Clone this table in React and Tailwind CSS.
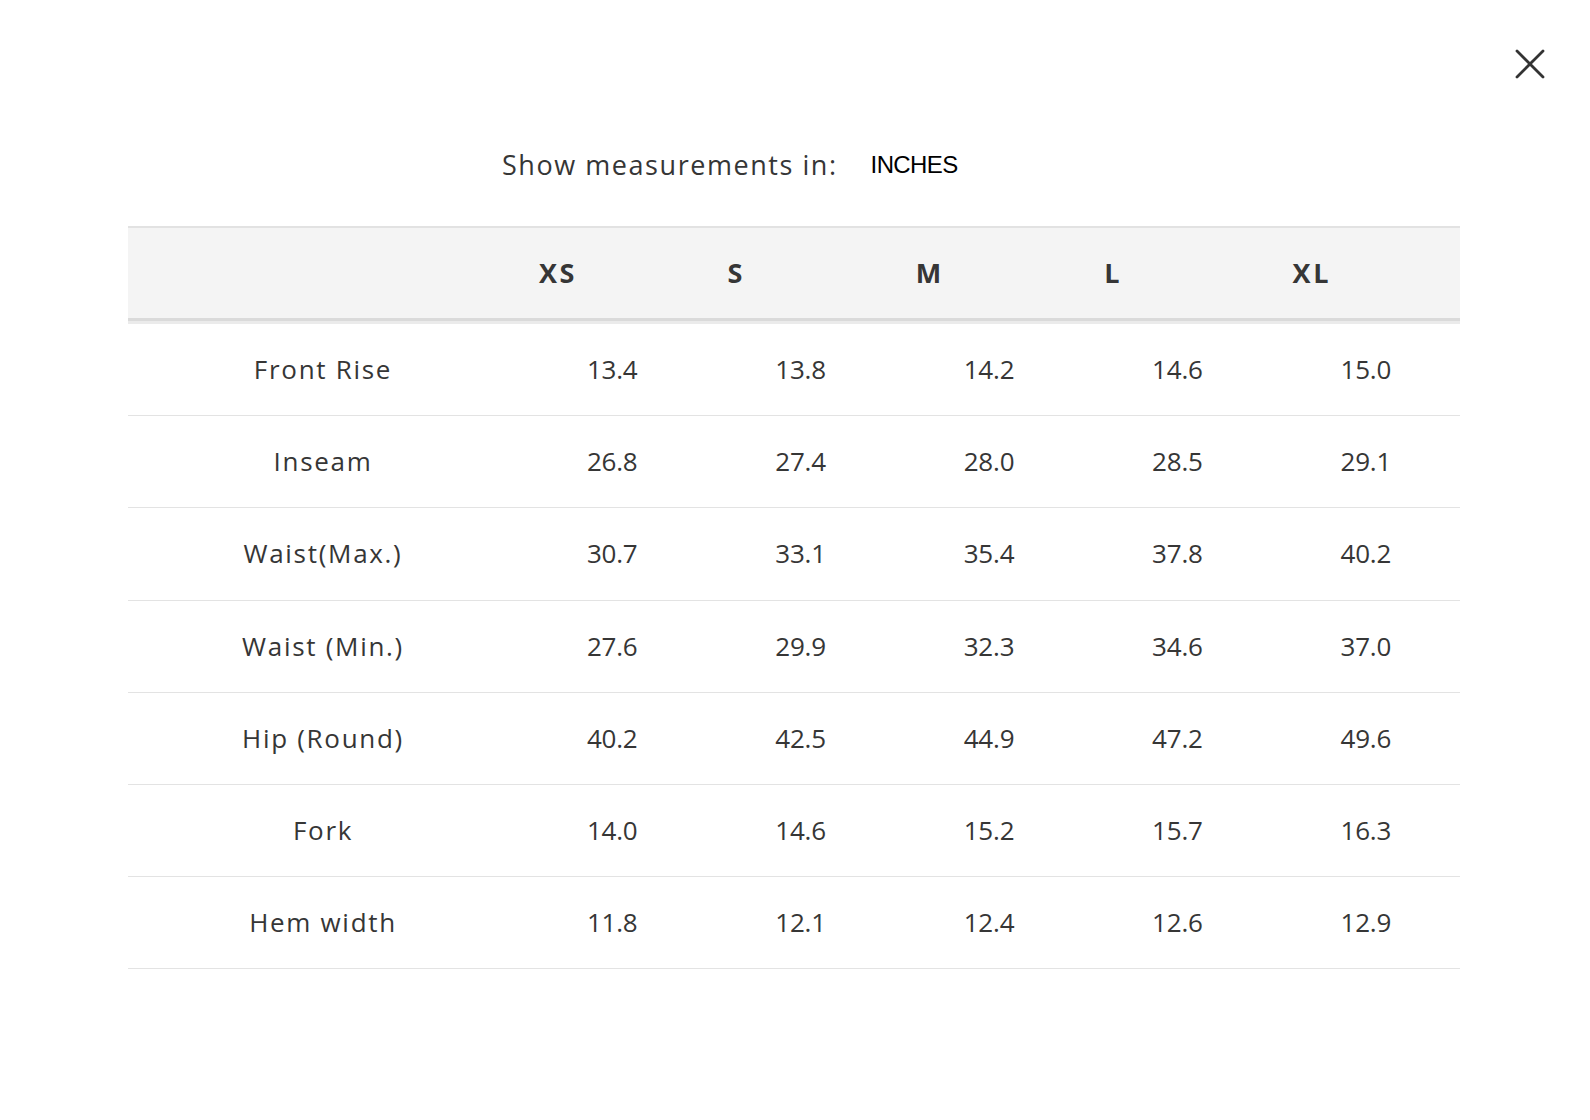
const sizes = ["XS", "S", "M", "L", "XL"];

const rows = [
  { label: "Front Rise", values: ["13.4", "13.8", "14.2", "14.6", "15.0"] },
  { label: "Inseam", values: ["26.8", "27.4", "28.0", "28.5", "29.1"] },
  { label: "Waist(Max.)", values: ["30.7", "33.1", "35.4", "37.8", "40.2"] },
  { label: "Waist (Min.)", values: ["27.6", "29.9", "32.3", "34.6", "37.0"] },
  { label: "Hip (Round)", values: ["40.2", "42.5", "44.9", "47.2", "49.6"] },
  { label: "Fork", values: ["14.0", "14.6", "15.2", "15.7", "16.3"] },
  { label: "Hem width", values: ["11.8", "12.1", "12.4", "12.6", "12.9"] },
];

function CloseIcon() {
  return (
    <svg width="30" height="30" viewBox="0 0 30 30" fill="none">
      <path
        d="M2 2L28 28M28 2L2 28"
        stroke="#333333"
        strokeWidth="2.8"
        strokeLinecap="round"
      />
    </svg>
  );
}

export default function App() {
  return (
    <div
      className="w-[1590px] h-[1120px] bg-white text-[#363636] relative"
      style={{ fontFamily: "'Open Sans', Lato, sans-serif" }}
    >
      {/* CLOSE */}
      <button className="absolute top-[49px] left-[1515px]">
        <CloseIcon />
      </button>

      <div className="pt-[145px] pl-[128px] w-[1460px]">
        {/* UNIT PICKER */}
        <div className="flex items-center ml-[374px] h-[40px]">
          <span className="text-[27px] tracking-[1.55px]">
            Show measurements in:
          </span>
          <span
            className="ml-[33px] text-[24px] text-black tracking-[-0.6px]"
            style={{ fontFamily: "'Liberation Sans', Arial, sans-serif" }}
          >
            INCHES
          </span>
        </div>

        {/* SIZE TABLE */}
        <div className="mt-[41px] w-[1332px]">
          <div className="grid grid-cols-[390px_repeat(5,1fr)] h-[95px] bg-[#f4f4f4] border-t-2 border-t-[#e2e2e2] border-b-[3px] border-b-[#dadada] shadow-[0_3px_0_#ebebeb]">
            <div />
            {sizes.map((size) => (
              <div
                key={size}
                className="flex items-center pl-[21px] text-[27px] font-bold tracking-[2.6px]"
              >
                {size}
              </div>
            ))}
          </div>

          <div className="pt-[3px]">
            {rows.map((row) => (
              <div
                key={row.label}
                className="grid grid-cols-[390px_repeat(5,1fr)] h-[92.2px] border-b border-[#e3e3e3] text-[26px]"
              >
                <div className="flex items-center justify-center tracking-[1.7px]">
                  {row.label}
                </div>
                {row.values.map((v, i) => (
                  <div
                    key={i}
                    className="flex items-center justify-center tracking-[-0.2px]"
                  >
                    {v}
                  </div>
                ))}
              </div>
            ))}
          </div>
        </div>
      </div>
    </div>
  );
}
